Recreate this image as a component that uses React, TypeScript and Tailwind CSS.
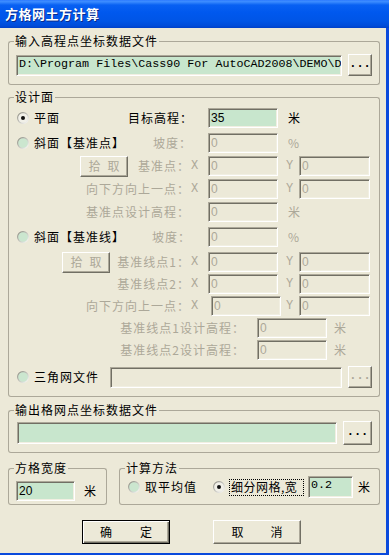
import React from "react";

type Kids = { children?: React.ReactNode; className?: string };

function Radio({ checked = false, className = "" }: { checked?: boolean; className?: string }) {
  return (
    <svg width="12" height="12" viewBox="0 0 12 12" className={`shrink-0 ${className}`}>
      <defs>
        <linearGradient id="rbStroke" x1="0" y1="0" x2="1" y2="1">
          <stop offset="0" stopColor="#85847A" />
          <stop offset="1" stopColor="#FFFFFF" />
        </linearGradient>
      </defs>
      <circle cx="6" cy="6" r="5.4" fill={checked ? "#F1F0E8" : "#CBE6CF"} stroke="url(#rbStroke)" strokeWidth="1.1" />
      {checked && <circle cx="6" cy="6" r="2" fill="#111" />}
    </svg>
  );
}

function Field({
  className = "",
  value = "",
  green = false,
  mono = false,
}: {
  className?: string;
  value?: string;
  green?: boolean;
  mono?: boolean;
}) {
  return (
    <div
      className={`shrink-0 flex items-center overflow-hidden whitespace-nowrap pl-[2px] tracking-normal leading-none border border-t-[#ACA899] border-l-[#ACA899] border-r-white border-b-white shadow-[inset_1px_1px_0_#716F64,inset_-1px_-1px_0_#F1EFE2] ${
        green ? "bg-[#C8E6CD] text-black" : "bg-[#ECE9D8] text-[#ACA899]"
      } ${mono ? "font-['Liberation_Mono',monospace] text-[11.7px]" : "font-['Liberation_Sans',Arial,sans-serif] text-[12px]"} ${className}`}
    >
      {value}
    </div>
  );
}

function Btn({ className = "", children, disabled = false, def = false }: Kids & { disabled?: boolean; def?: boolean }) {
  return (
    <button
      type="button"
      className={`shrink-0 flex items-center justify-center bg-[#ECE9D8] tracking-normal ${
        def
          ? "border border-black shadow-[inset_1px_1px_0_#fff,inset_-1px_-1px_0_#716F64,inset_-2px_-2px_0_#ACA899]"
          : "border border-t-white border-l-white border-r-[#716F64] border-b-[#716F64] shadow-[inset_-1px_-1px_0_#ACA899]"
      } ${disabled ? "text-[#ACA899]" : "text-black"} ${className}`}
    >
      {children}
    </button>
  );
}

function Dots({ disabled = false }: { disabled?: boolean }) {
  return (
    <span className={`font-['Liberation_Mono',monospace] font-bold text-[12px] leading-none -mt-[2px] ${disabled ? "text-[#ACA899]" : "text-black"}`}>
      ...
    </span>
  );
}

function Group({ title, className = "", contentClass = "", children }: Kids & { title: string; contentClass?: string }) {
  return (
    <div className={`flex flex-col shrink-0 ${className}`}>
      <div className="flex h-[14px]">
        <div className="w-[6px] mt-[7px] border-t border-l border-[#ACA899] rounded-tl-[3px]" />
        <span className="px-[1px] leading-[14px] whitespace-nowrap">{title}</span>
        <div className="flex-1 mt-[7px] border-t border-r border-[#ACA899] rounded-tr-[3px]" />
      </div>
      <div className={`border-l border-r border-b border-[#ACA899] rounded-b-[3px] ${contentClass}`}>{children}</div>
    </div>
  );
}

const gray = "text-[#ACA899]";

function XY({ children, className = "" }: Kids) {
  return (
    <span className={`shrink-0 font-['Liberation_Mono',monospace] text-[12px] tracking-normal text-[#ACA899] ${className}`}>
      {children}
    </span>
  );
}

function Row({ children, className = "" }: Kids) {
  return <div className={`flex items-center h-[22px] shrink-0 ${className}`}>{children}</div>;
}

function Pick({ className = "" }: { className?: string }) {
  return (
    <Btn disabled className={`w-[48px] h-[21px] ${className}`}>
      <span>拾</span>
      <span className="ml-[7px]">取</span>
    </Btn>
  );
}

export default function App() {
  return (
    <div className="w-[389px] h-[555px] overflow-hidden bg-[#ECE9D8] text-black text-[12px] tracking-[1px] font-['Noto_Sans_CJK_SC','Noto_Sans',sans-serif] flex flex-col">
      {/* Title bar */}
      <div className="h-[28px] shrink-0 flex items-center pl-[5px] bg-[linear-gradient(to_bottom,#2E7BFF_0%,#3D8DFF_6%,#0860F2_18%,#0058EE_45%,#0055E6_75%,#004CD9_92%,#0040C8_100%)]">
        <span className="text-white font-bold text-[13px] tracking-[0.5px] [text-shadow:1px_1px_0_#0A2A8A]">方格网土方计算</span>
      </div>

      {/* Body */}
      <div className="flex-1 flex flex-col border-r-[3px] border-b-[2px] border-[#0A4ADC]">
        {/* Group 1 */}
        <Group title="输入高程点坐标数据文件" className="ml-[8px] w-[372px] mt-[6px]" contentClass="pt-[6px] pb-[8px]">
          <Row>
            <Field mono green className="ml-[7px] w-[326px] h-[21px]" value={"D:\\Program Files\\Cass90 For AutoCAD2008\\DEMO\\D"} />
            <Btn className="ml-[6px] w-[24px] h-[22px]">
              <Dots />
            </Btn>
          </Row>
        </Group>

        {/* Group 2 */}
        <Group title="设计面" className="ml-[8px] w-[372px] mt-[5px]" contentClass="pb-[8px]">
          {/* 平面 */}
          <Row className="mt-[3px]">
            <Radio checked className="ml-[8px]" />
            <span className="ml-[5px] w-[94px] shrink-0">平面</span>
            <span className="w-[80px] shrink-0">目标高程：</span>
            <Field green className="w-[70px] h-[20px]" value="35" />
            <span className="ml-[10px]">米</span>
          </Row>
          {/* 斜面 基准点 */}
          <Row className="mt-[3px]">
            <Radio className="ml-[8px]" />
            <span className="ml-[5px] w-[119px] shrink-0">斜面【基准点】</span>
            <span className={`w-[55px] shrink-0 ${gray}`}>坡度：</span>
            <Field className="w-[70px] h-[20px]" value="0" />
            <span className={`ml-[10px] ${gray}`}>%</span>
          </Row>
          <Row className="mt-[1px]">
            <Pick className="ml-[71px]" />
            <span className={`w-[62px] shrink-0 text-right ${gray}`}>基准点：</span>
            <XY className="w-[18px] pl-[1px]">X</XY>
            <Field className="w-[70px] h-[20px]" value="0" />
            <XY className="w-[21px] pl-[8px]">Y</XY>
            <Field className="w-[71px] h-[20px]" value="0" />
          </Row>
          <Row className="mt-[1px]">
            <span className={`w-[181px] shrink-0 text-right ${gray}`}>向下方向上一点：</span>
            <XY className="w-[18px] pl-[1px]">X</XY>
            <Field className="w-[70px] h-[20px]" value="0" />
            <XY className="w-[21px] pl-[8px]">Y</XY>
            <Field className="w-[71px] h-[20px]" value="0" />
          </Row>
          <Row className="mt-[1px]">
            <span className={`w-[181px] shrink-0 text-right ${gray}`}>基准点设计高程：</span>
            <span className="w-[18px] shrink-0" />
            <Field className="w-[70px] h-[20px]" value="0" />
            <span className={`ml-[10px] ${gray}`}>米</span>
          </Row>
          {/* 斜面 基准线 */}
          <Row className="mt-[3px]">
            <Radio className="ml-[8px]" />
            <span className="ml-[5px] w-[118px] shrink-0">斜面【基准线】</span>
            <span className={`w-[56px] shrink-0 ${gray}`}>坡度：</span>
            <Field className="w-[70px] h-[20px]" value="0" />
            <span className={`ml-[10px] ${gray}`}>%</span>
          </Row>
          <Row className="mt-[3px]">
            <Pick className="ml-[53px]" />
            <span className={`w-[80px] shrink-0 text-right ${gray}`}>基准线点1：</span>
            <XY className="w-[18px] pl-[1px]">X</XY>
            <Field className="w-[70px] h-[20px]" value="0" />
            <XY className="w-[21px] pl-[8px]">Y</XY>
            <Field className="w-[71px] h-[20px]" value="0" />
          </Row>
          <Row>
            <span className={`w-[181px] shrink-0 text-right ${gray}`}>基准线点2：</span>
            <XY className="w-[18px] pl-[1px]">X</XY>
            <Field className="w-[70px] h-[20px]" value="0" />
            <XY className="w-[21px] pl-[8px]">Y</XY>
            <Field className="w-[71px] h-[20px]" value="0" />
          </Row>
          <Row>
            <span className={`w-[181px] shrink-0 text-right ${gray}`}>向下方向上一点：</span>
            <XY className="w-[21px] pl-[1px]">X</XY>
            <Field className="w-[70px] h-[20px]" value="0" />
            <XY className="w-[18px] pl-[5px]">Y</XY>
            <Field className="w-[71px] h-[20px]" value="0" />
          </Row>
          <Row>
            <span className={`w-[236px] shrink-0 text-right ${gray}`}>基准线点1设计高程：</span>
            <span className="w-[12px] shrink-0" />
            <Field className="w-[70px] h-[20px]" value="0" />
            <span className={`ml-[7px] ${gray}`}>米</span>
          </Row>
          <Row>
            <span className={`w-[236px] shrink-0 text-right ${gray}`}>基准线点2设计高程：</span>
            <span className="w-[12px] shrink-0" />
            <Field className="w-[70px] h-[20px]" value="0" />
            <span className={`ml-[7px] ${gray}`}>米</span>
          </Row>
          {/* 三角网文件 */}
          <Row className="mt-[5px]">
            <Radio className="ml-[8px]" />
            <span className="ml-[5px] w-[76px] shrink-0">三角网文件</span>
            <Field className="w-[232px] h-[21px]" />
            <Btn disabled className="ml-[6px] w-[24px] h-[22px]">
              <Dots disabled />
            </Btn>
          </Row>
        </Group>

        {/* Group 3 */}
        <Group title="输出格网点坐标数据文件" className="ml-[8px] w-[372px] mt-[6px]" contentClass="pt-[4px] pb-[7px]">
          <div className="flex items-center h-[24px]">
            <Field green className="ml-[8px] w-[320px] h-[22px]" />
            <Btn className="ml-[6px] w-[29px] h-[24px]">
              <Dots />
            </Btn>
          </div>
        </Group>

        {/* Groups 4 & 5 */}
        <div className="flex items-start mt-[8px] shrink-0">
          <Group title="方格宽度" className="ml-[8px] w-[99px]" contentClass="pt-[6px] pb-[3px]">
            <div className="flex items-center h-[20px]">
              <Field green className="ml-[7px] w-[59px] h-[20px]" value="20" />
              <span className="ml-[9px]">米</span>
            </div>
          </Group>
          <Group title="计算方法" className="ml-[12px] w-[261px]" contentClass="pt-[1px] pb-[6px]">
            <div className="flex items-center h-[22px]">
              <Radio className="ml-[8px]" />
              <span className="ml-[5px] w-[68px] shrink-0">取平均值</span>
              <Radio checked />
              <span className="ml-[4px] h-[17px] w-[75px] shrink-0 flex items-center pl-[1px] border border-dotted border-black whitespace-nowrap tracking-[0.5px]">
                细分网格,宽
              </span>
              <Field mono green className="ml-[4px] w-[45px] h-[22px] !items-start pt-[3px]" value="0.2" />
              <span className="ml-[5px]">米</span>
            </div>
          </Group>
        </div>

        {/* Buttons */}
        <div className="flex mt-[15px] shrink-0">
          <Btn def className="ml-[82px] w-[88px] h-[24px]">
            <span>确</span>
            <span className="ml-[28px]">定</span>
          </Btn>
          <Btn className="ml-[43px] w-[88px] h-[24px]">
            <span>取</span>
            <span className="ml-[27px]">消</span>
          </Btn>
        </div>
      </div>
    </div>
  );
}
